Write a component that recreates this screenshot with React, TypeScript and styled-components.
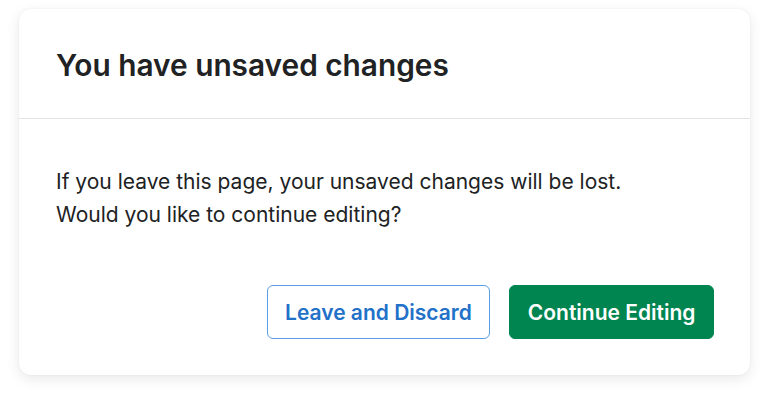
import React from "react";
import styled, { createGlobalStyle } from "styled-components";

const GlobalStyle = createGlobalStyle`
  html, body {
    margin: 0;
    padding: 0;
    background: #ffffff;
  }
  body {
    font-family: Inter, "Noto Sans", "Liberation Sans", sans-serif;
    -webkit-font-smoothing: antialiased;
  }
`;

const Page = styled.div`
  padding: 9px 18px 28px 19px;
`;

const Card = styled.div`
  width: 731px;
  height: 366px;
  box-sizing: border-box;
  background: #ffffff;
  border-radius: 12px;
  box-shadow: 0 4px 14px rgba(0, 0, 0, 0.09), 0 0 3px rgba(0, 0, 0, 0.05);
  display: flex;
  flex-direction: column;
  overflow: hidden;
`;

const Header = styled.div`
  padding: 38px 37px 35px;
  border-bottom: 1px solid #e1e3e5;
`;

const Title = styled.h2`
  margin: 0;
  font-size: 29.8px;
  line-height: 36px;
  font-weight: 600;
  color: #202223;
`;

const Body = styled.div`
  padding: 46px 36px 36px 37px;
  display: flex;
  flex-direction: column;
  flex: 1;
`;

const Message = styled.p`
  margin: 0;
  font-size: 21px;
  line-height: 33px;
  font-weight: 400;
  color: #202223;
`;

const Actions = styled.div`
  margin-top: auto;
  display: flex;
  justify-content: flex-end;
  gap: 19px;
`;

const Button = styled.button<{ $primary?: boolean }>`
  height: 54px;
  padding: 0 17.5px;
  box-sizing: border-box;
  border-radius: 6px;
  font-family: Inter, "Noto Sans", "Liberation Sans", sans-serif;
  font-size: 21px;
  font-weight: 600;
  cursor: pointer;
  border: 1px solid ${(p) => (p.$primary ? "#008551" : "#5a9ee6")};
  background: ${(p) => (p.$primary ? "#008551" : "#ffffff")};
  color: ${(p) => (p.$primary ? "#ffffff" : "#2271c9")};
`;

export default function App() {
  return (
    <>
      <GlobalStyle />
      <Page>
        <Card>
          <Header>
            <Title>You have unsaved changes</Title>
          </Header>
          <Body>
            <Message>
              If you leave this page, your unsaved changes will be lost.
              <br />
              Would you like to continue editing?
            </Message>
            <Actions>
              <Button>Leave and Discard</Button>
              <Button $primary>Continue Editing</Button>
            </Actions>
          </Body>
        </Card>
      </Page>
    </>
  );
}
